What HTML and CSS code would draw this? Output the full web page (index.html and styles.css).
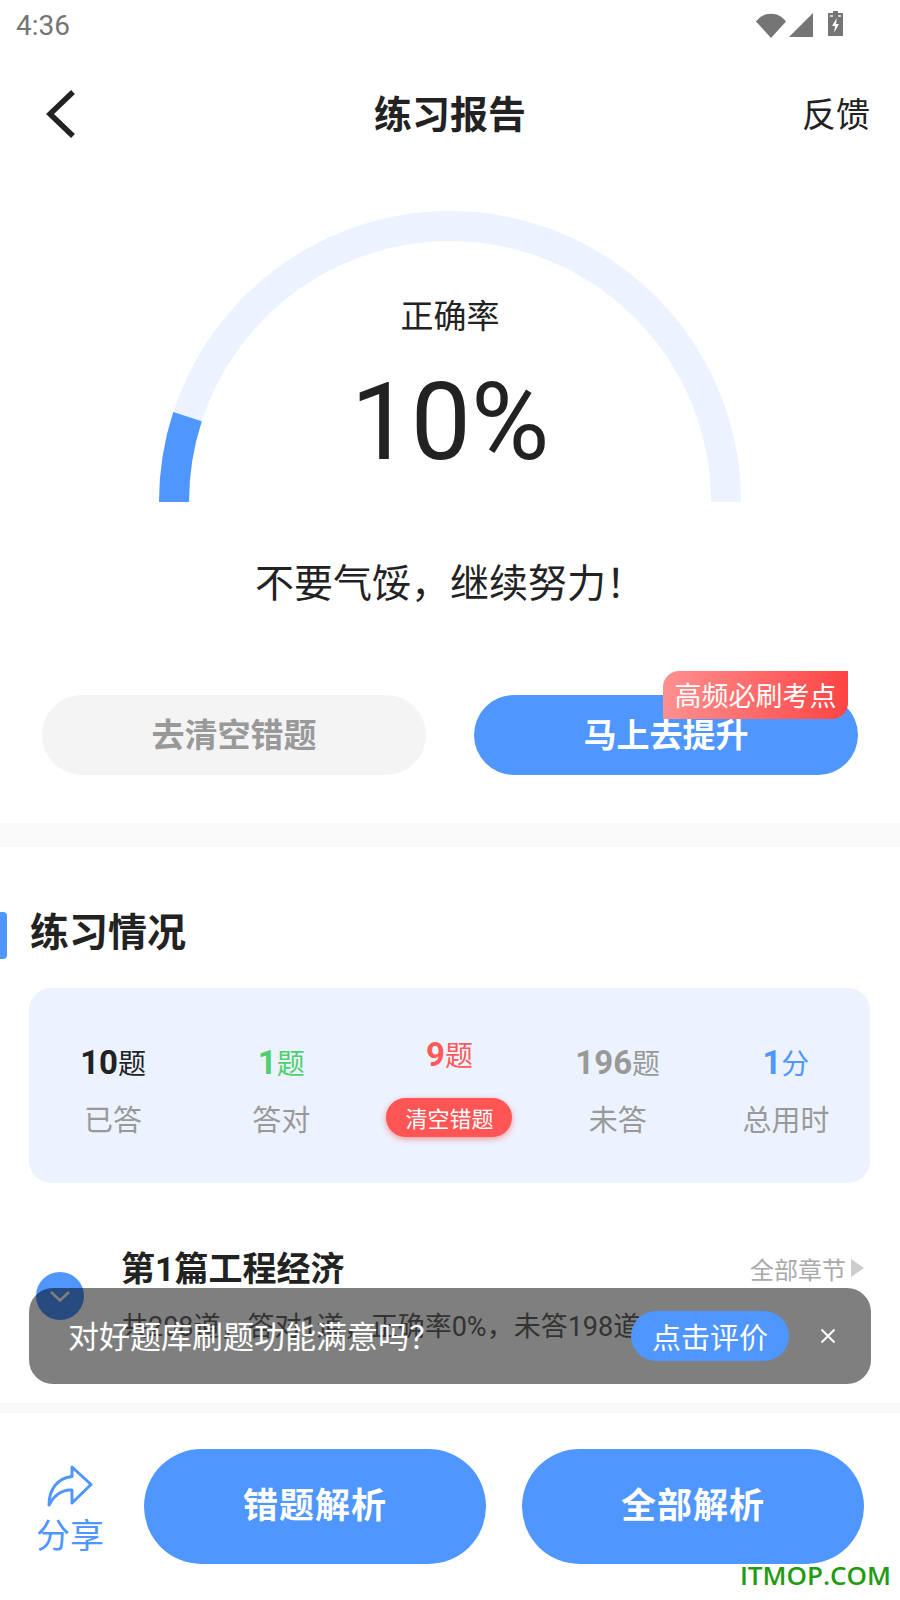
FILE: index.html
```html
<!DOCTYPE html>
<html lang="zh-CN">
<head>
    <meta charset="UTF-8">
    <meta name="viewport" content="width=device-width, initial-scale=1.0">
    <title>练习报告</title>
    <link rel="stylesheet" href="styles.css">
</head>
<body>
    <div class="page">
        <div class="status-bar">
            <span class="clock">4:36</span>
            <div class="status-icons">
                <svg class="icon-wifi" width="30" height="25" viewBox="0 0 30 25"><path d="M0 8.5C4 3.5 9 0.8 15 0.8S26 3.5 30 8.5L15 25Z"/></svg>
                <svg class="icon-signal" width="24" height="24" viewBox="0 0 24 24"><path d="M24 0V24H0Z"/></svg>
                <svg class="icon-battery" width="15" height="25" viewBox="0 0 15 25"><path fill-rule="evenodd" d="M5 0H10V2H14C14.6 2 15 2.4 15 3V24C15 24.6 14.6 25 14 25H1C.4 25 0 24.6 0 24V3C0 2.4 .4 2 1 2H5ZM8.8 7L4 15H7L6.2 21.5L11 13H8Z"/><rect x="2" y="4" width="3" height="2" fill="#fff" opacity=".7"/><rect x="10" y="4" width="3" height="2" fill="#fff" opacity=".7"/></svg>
            </div>
        </div>

        <div class="nav">
            <svg class="back" width="30" height="48" viewBox="0 0 30 48"><path d="M27 2L4 24L27 46" fill="none" stroke="#222" stroke-width="5.5"/></svg>
            <h1>练习报告</h1>
            <span class="feedback">反馈</span>
        </div>

        <div class="gauge">
            <svg width="582" height="291" viewBox="0 0 582 291">
                <path d="M15 291A276 276 0 0 1 567 291" fill="none" stroke="#ecf3ff" stroke-width="30"/>
                <path d="M15 291A276 276 0 0 1 28.5 205.7" fill="none" stroke="#4f96ff" stroke-width="30"/>
            </svg>
            <div class="gauge-text">
                <div class="gauge-label">正确率</div>
                <div class="gauge-value">10%</div>
            </div>
        </div>

        <p class="message">不要气馁，继续努力！</p>

        <div class="actions">
            <button class="pill-btn grey">去清空错题</button>
            <button class="pill-btn blue">马上去提升<span class="hot-tag">高频必刷考点</span></button>
        </div>

        <div class="divider"></div>

        <div class="section-head">
            <i class="section-mark"></i>
            <h2>练习情况</h2>
        </div>

        <div class="stats">
            <div class="stat">
                <div class="stat-value dark"><b>10</b>题</div>
                <div class="stat-label">已答</div>
            </div>
            <div class="stat">
                <div class="stat-value green"><b>1</b>题</div>
                <div class="stat-label">答对</div>
            </div>
            <div class="stat">
                <div class="stat-value red"><b>9</b>题</div>
                <div class="clear-btn">清空错题</div>
            </div>
            <div class="stat">
                <div class="stat-value grey-text"><b>196</b>题</div>
                <div class="stat-label">未答</div>
            </div>
            <div class="stat">
                <div class="stat-value blue-text"><b>1</b>分</div>
                <div class="stat-label">总用时</div>
            </div>
        </div>

        <div class="chapter">
            <div class="chapter-toggle">
                <svg width="20" height="11" viewBox="0 0 20 11"><path d="M1 1L10 9.5L19 1" fill="none" stroke="#fff" stroke-width="2.5"/></svg>
            </div>
            <div class="chapter-body">
                <div class="chapter-top">
                    <h3>第1篇工程经济</h3>
                    <span class="chapter-all">全部章节<i class="triangle"></i></span>
                </div>
                <p class="chapter-info">共208道，答对1道，正确率0%，未答198道</p>
            </div>
        </div>

        <div class="divider thin"></div>

        <div class="bottom-bar">
            <div class="share">
                <svg width="46" height="42" viewBox="0 0 46 42"><path d="M25 2L44 19.5L25 38V25C14 24 6 32 2 40C2 25 10 13 25 11.5Z" fill="none" stroke="#4f96ff" stroke-width="3" stroke-linejoin="round"/></svg>
                <span>分享</span>
            </div>
            <button class="big-btn">错题解析</button>
            <button class="big-btn">全部解析</button>
        </div>

        <div class="toast">
            <span class="toast-text">对好题库刷题功能满意吗？</span>
            <span class="toast-btn">点击评价</span>
            <svg class="toast-close" width="16" height="16" viewBox="0 0 16 16"><path d="M1.5 1.5L14.5 14.5M14.5 1.5L1.5 14.5" stroke="#fff" stroke-width="2"/></svg>
        </div>

        <div class="watermark">ITMOP.COM</div>
    </div>
</body>
</html>
```

FILE: styles.css
```css
* {
    margin: 0;
    padding: 0;
    box-sizing: border-box;
}

body {
    background: #fff;
    font-family: Roboto, "Noto Sans CJK SC", sans-serif;
    color: #222;
    overflow: hidden;
}

button {
    border: none;
    font-family: inherit;
}

.page {
    position: relative;
    width: 900px;
    height: 1600px;
    overflow: hidden;
}

/* status bar */
.status-bar {
    height: 50px;
    display: flex;
    align-items: center;
    justify-content: space-between;
    padding: 0 57px 0 16px;
}

.clock {
    font-size: 28px;
    color: #757575;
}

.status-icons {
    display: flex;
    align-items: center;
    gap: 3px;
}

.status-icons svg {
    fill: #757575;
    display: block;
}

.icon-battery {
    margin-left: 12px;
    margin-top: -3px;
}

/* nav */
.nav {
    position: relative;
    height: 100px;
    margin-top: 15px;
    display: flex;
    align-items: center;
    justify-content: space-between;
    padding: 0 30px 2px 46px;
}

.nav h1 {
    position: absolute;
    left: 0;
    right: 0;
    top: 28px;
    text-align: center;
    font-size: 38px;
    line-height: 44px;
    font-weight: 700;
}

.feedback {
    margin-bottom: 4px;
    font-size: 34px;
}

/* gauge */
.gauge {
    position: relative;
    width: 582px;
    height: 291px;
    margin: 46px auto 0;
}

.gauge svg {
    display: block;
}

.gauge-text {
    position: absolute;
    top: 0;
    left: 0;
    right: 0;
    text-align: center;
}

.gauge-label {
    margin-top: 86px;
    font-size: 33px;
    line-height: 40px;
}

.gauge-value {
    margin-top: 26px;
    font-size: 107px;
    line-height: 120px;
}

.message {
    margin-top: 62px;
    text-align: center;
    font-size: 39px;
    line-height: 40px;
}

/* buttons */
.actions {
    display: flex;
    gap: 48px;
    margin-top: 91px;
    padding: 0 42px;
}

.pill-btn {
    position: relative;
    flex: 1;
    height: 80px;
    padding-bottom: 4px;
    border-radius: 40px;
    font-size: 33px;
    font-weight: 700;
}

.pill-btn.grey {
    background: #f4f4f4;
    color: #999;
}

.pill-btn.blue {
    background: #4f96ff;
    color: #fff;
}

.hot-tag {
    position: absolute;
    top: -24px;
    right: 10px;
    width: 185px;
    height: 48px;
    line-height: 52px;
    text-align: center;
    font-size: 27px;
    font-weight: 400;
    border-radius: 16px 0 16px 0;
    background: linear-gradient(90deg, #ff9090, #ff4444);
}

.divider {
    height: 24px;
    margin-top: 48px;
    background: #f9f9f9;
}

.divider.thin {
    height: 10px;
    margin-top: 0;
}

/* practice summary */
.section-head {
    display: flex;
    align-items: center;
    gap: 23px;
    height: 47px;
    margin-top: 65px;
}

.section-mark {
    width: 7px;
    height: 47px;
    background: #4f96ff;
    border-radius: 0 4px 4px 0;
}

.section-head h2 {
    margin-bottom: 4px;
    font-size: 39px;
    line-height: 47px;
    font-weight: 700;
}

.stats {
    display: grid;
    grid-template-columns: repeat(5, 1fr);
    align-items: center;
    height: 195px;
    margin: 29px 30px 0 29px;
    padding-top: 12px;
    background: #ecf3ff;
    border-radius: 22px;
}

.stat {
    text-align: center;
}

.stat-value {
    font-size: 28px;
    line-height: 36px;
}

.stat-value b {
    font-size: 33px;
}

.stat-value.dark { color: #222; }
.stat-value.green { color: #4fcf6e; }
.stat-value.red { color: #ff5a5a; }
.stat-value.grey-text { color: #999; }
.stat-value.blue-text { color: #4f96ff; }

.stat-label {
    margin-top: 20px;
    font-size: 29px;
    line-height: 36px;
    color: #999;
}

.clear-btn {
    width: 126px;
    height: 39px;
    margin: 23px auto 10px;
    border-radius: 20px;
    background: #ff5555;
    box-shadow: 0 2px 6px rgba(255, 85, 85, 0.6);
    color: #fff;
    font-size: 22px;
    line-height: 43px;
}

/* chapter row */
.chapter {
    display: flex;
    height: 220px;
    padding: 66px 36px 0 36px;
}

.chapter-toggle {
    flex: none;
    width: 48px;
    height: 48px;
    margin-top: 23px;
    display: flex;
    align-items: center;
    justify-content: center;
    border-radius: 50%;
    background: #4f96ff;
}

.chapter-body {
    flex: 1;
    margin-left: 37px;
}

.chapter-top {
    display: flex;
    align-items: flex-start;
    justify-content: space-between;
}

.chapter-top h3 {
    font-size: 34px;
    line-height: 40px;
    font-weight: 700;
}

.chapter-all {
    display: flex;
    align-items: flex-start;
    margin-top: 7px;
    font-size: 24px;
    line-height: 30px;
    color: #aaa;
}

.triangle {
    width: 0;
    height: 0;
    margin: 3px 0 0 5px;
    border-left: 13px solid #ccc;
    border-top: 9px solid transparent;
    border-bottom: 9px solid transparent;
}

.chapter-info {
    margin-top: 20px;
    font-size: 27px;
    line-height: 36px;
    color: #666;
    white-space: nowrap;
}

/* bottom bar */
.bottom-bar {
    display: flex;
    align-items: center;
    padding: 36px 36px 0 35px;
}

.share {
    width: 70px;
    margin-top: 7px;
    margin-right: 39px;
    display: flex;
    flex-direction: column;
    align-items: center;
    color: #4f96ff;
    font-size: 34px;
    line-height: 40px;
    white-space: nowrap;
}

.share svg {
    display: block;
    margin-bottom: 9px;
}

.big-btn {
    flex: none;
    width: 342px;
    height: 115px;
    padding-bottom: 8px;
    border-radius: 58px;
    background: #4f96ff;
    color: #fff;
    font-size: 35px;
    font-weight: 700;
    letter-spacing: 1px;
}

.big-btn + .big-btn {
    margin-left: 36px;
}

/* overlays */
.toast {
    position: absolute;
    left: 29px;
    top: 1288px;
    width: 842px;
    height: 96px;
    display: flex;
    align-items: center;
    padding-left: 39px;
    border-radius: 24px;
    background: rgba(0, 0, 0, 0.5);
    color: #fff;
}

.toast-text {
    width: 563px;
    margin-bottom: 4px;
    font-size: 31px;
    white-space: nowrap;
}

.toast-btn {
    width: 158px;
    height: 50px;
    line-height: 56px;
    text-align: center;
    border-radius: 25px;
    background: #4f96ff;
    font-size: 29px;
}

.toast-close {
    margin-left: 31px;
}

.watermark {
    position: absolute;
    right: 9px;
    bottom: 10px;
    font-family: "Open Sans", sans-serif;
    font-size: 26px;
    font-weight: 600;
    line-height: 30px;
    color: #229a11;
}
```
